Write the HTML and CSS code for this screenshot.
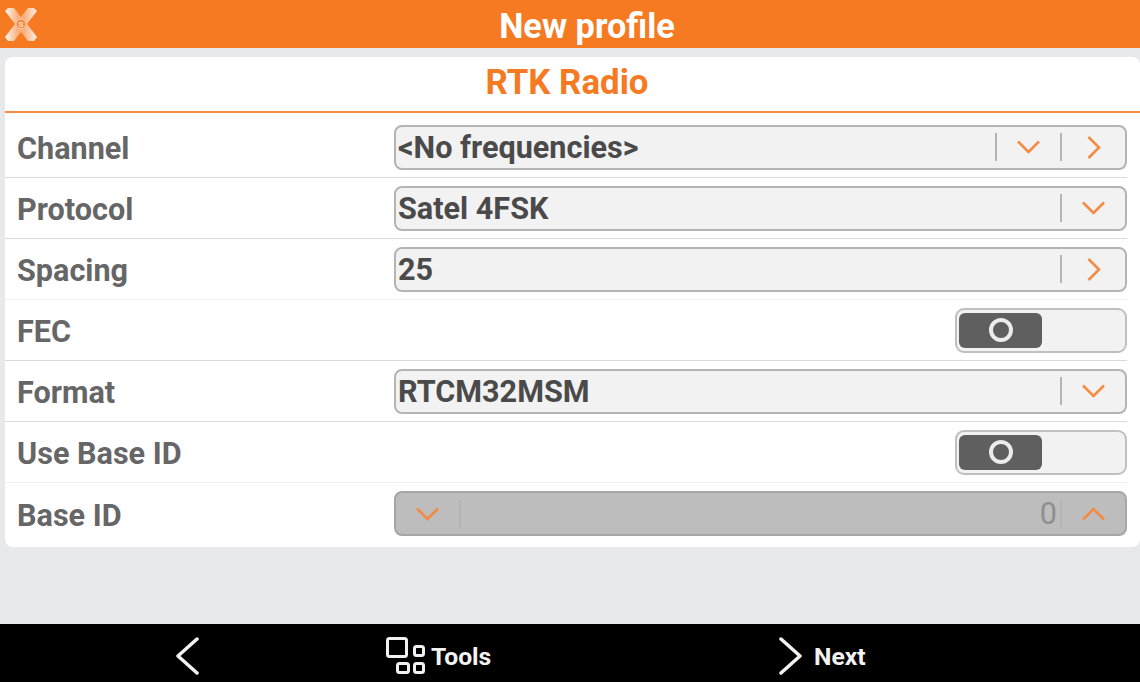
FILE: index.html
```html
<!DOCTYPE html>
<html lang="en">
<head>
<meta charset="utf-8">
<title>New profile</title>
<link rel="stylesheet" href="styles.css">
</head>
<body>
<div class="screen">
  <header class="topbar">
    <svg class="logo" viewBox="0 0 34 35" width="34" height="35">
      <defs>
        <linearGradient id="bandA" x1="0" y1="0" x2="1" y2="0">
          <stop offset="0" stop-color="#fff" stop-opacity=".95"/>
          <stop offset=".4" stop-color="#fff" stop-opacity=".4"/>
          <stop offset=".6" stop-color="#fff" stop-opacity=".4"/>
          <stop offset="1" stop-color="#fff" stop-opacity=".9"/>
        </linearGradient>
      </defs>
      <path d="M1 4 4 1h6l7 9 7-9h6l3 3-10 13 10 13-3 4h-6l-7-9-7 9H4l-3-4 10-13z" fill="url(#bandA)"/>
      <circle cx="17" cy="17" r="5" class="logo-dot"/>
      <text x="17" y="20" class="logo-s" text-anchor="middle">S</text>
    </svg>
    <h1 class="page-title">New profile</h1>
  </header>

  <main class="content">
    <section class="card">
      <h2 class="card-title">RTK Radio</h2>
      <div class="rows">
        <div class="row">
          <span class="label">Channel</span>
          <div class="field">
            <span class="value">&lt;No frequencies&gt;</span>
            <span class="sep"></span>
            <span class="btn"><svg class="chev" viewBox="0 0 24 14"><path d="M1.500 1.500 12 12 22.500 1.500"/></svg></span>
            <span class="sep"></span>
            <span class="btn"><svg class="chev-r" viewBox="0 0 14 24"><path d="M1.500 1.500 12 12 1.500 22.500"/></svg></span>
          </div>
        </div>
        <div class="row">
          <span class="label">Protocol</span>
          <div class="field">
            <span class="value">Satel 4FSK</span>
            <span class="sep"></span>
            <span class="btn"><svg class="chev" viewBox="0 0 24 14"><path d="M1.500 1.500 12 12 22.500 1.500"/></svg></span>
          </div>
        </div>
        <div class="row">
          <span class="label">Spacing</span>
          <div class="field">
            <span class="value">25</span>
            <span class="sep"></span>
            <span class="btn"><svg class="chev-r" viewBox="0 0 14 24"><path d="M1.500 1.500 12 12 1.500 22.500"/></svg></span>
          </div>
        </div>
        <div class="row">
          <span class="label">FEC</span>
          <div class="toggle"><span class="knob"><span class="ring"></span></span></div>
        </div>
        <div class="row">
          <span class="label">Format</span>
          <div class="field">
            <span class="value">RTCM32MSM</span>
            <span class="sep"></span>
            <span class="btn"><svg class="chev" viewBox="0 0 24 14"><path d="M1.500 1.500 12 12 22.500 1.500"/></svg></span>
          </div>
        </div>
        <div class="row">
          <span class="label">Use Base ID</span>
          <div class="toggle"><span class="knob"><span class="ring"></span></span></div>
        </div>
        <div class="row">
          <span class="label">Base ID</span>
          <div class="field disabled">
            <span class="btn"><svg class="chev" viewBox="0 0 24 14"><path d="M1.500 1.500 12 12 22.500 1.500"/></svg></span>
            <span class="sep"></span>
            <span class="number">0</span>
            <span class="sep"></span>
            <span class="btn"><svg class="chev" viewBox="0 0 24 14"><path d="M1.500 12.500 12 2 22.500 12.500"/></svg></span>
          </div>
        </div>
      </div>
    </section>
  </main>

  <footer class="bottombar">
    <div class="nav nav-back">
      <svg class="nav-chev" viewBox="0 0 24 38"><path d="M22 2 3 19l19 17"/></svg>
    </div>
    <div class="nav nav-tools">
      <svg class="tools-icon" viewBox="0 0 39 38">
        <rect x="1.500" y="1.500" width="19" height="18" rx="2"/>
        <rect x="28.500" y="9.500" width="9" height="9" rx="2"/>
        <rect x="11.500" y="26.500" width="11" height="9" rx="2"/>
        <rect x="28.500" y="26.500" width="9" height="9" rx="2"/>
      </svg>
      <span class="nav-text">Tools</span>
    </div>
    <div class="nav nav-next">
      <svg class="nav-chev" viewBox="0 0 24 38"><path d="M2 2l19 17L2 36"/></svg>
      <span class="nav-text">Next</span>
    </div>
  </footer>
</div>
</body>
</html>
```

FILE: styles.css
```css
* { box-sizing: border-box; }
html, body { margin: 0; padding: 0; }
body { font-family: Roboto, "Liberation Sans", sans-serif; background: #e8e9ec; }

.screen { width: 1140px; height: 682px; display: flex; flex-direction: column; overflow: hidden; }

.topbar {
  height: 48px;
  flex: none;
  background: #f67a22;
  display: flex;
  align-items: center;
  justify-content: center;
  position: relative;
}
.logo { position: absolute; left: 4px; top: 7px; }
.logo-dot { fill: #f58a42; stroke: #fbd3b4; stroke-width: 1; }
.logo-s { font: 700 8px Roboto, sans-serif; fill: #fde3cf; }
.page-title { margin: 0; color: #fff; font-size: 34.300px; font-weight: 700; line-height: 48px; padding: 3px 0 0 34px; }

.content { flex: 1; padding: 9px 0 0 5px; }
.card { width: 1135px; height: 490px; background: #fff; border-radius: 8px; }
.card-title {
  margin: 0;
  height: 56px;
  border-bottom: 2px solid #f98c3f;
  color: #f67a22;
  font-size: 34.800px;
  font-weight: 700;
  line-height: 51px;
  text-align: center;
  padding-right: 11px;
}
.rows { padding: 0 13px 0 0; }
.row {
  height: 61px;
  display: flex;
  align-items: center;
  justify-content: space-between;
  border-bottom: 1px solid #d9d9d9;
  padding: 0 0 0 12px;
}
.row:first-child { height: 65px; padding-top: 4px; }
.row:nth-child(3) { border-bottom-color: #efefef; }
.row:nth-child(6) { border-bottom-color: #efefef; }
.row:last-child { border-bottom: 0; height: 63px; padding-bottom: 2px; }

.label { color: #666; font-size: 30.600px; font-weight: 700; padding-top: 3px; }

.field {
  width: 733px;
  height: 45px;
  background: #f2f2f2;
  border: 2px solid #b4b4b4;
  border-radius: 8px;
  display: flex;
  align-items: center;
  padding: 0 0 0 2px;
}
.value { flex: 1; color: #4a4a4a; font-size: 30.600px; font-weight: 700; line-height: 41px; }
.sep { width: 2px; height: 28px; background: #b4b4b4; flex: none; }
.btn { width: 63px; flex: none; display: flex; align-items: center; justify-content: center; }
.chev { width: 25px; height: 14px; fill: none; stroke: #f58a42; stroke-width: 2.500; }
.chev-r { width: 14px; height: 25px; fill: none; stroke: #f58a42; stroke-width: 2.500; }

.disabled { background: #bdbdbd; border-color: #a6a6a6; padding: 0; }
.number { flex: 1; text-align: right; color: #8f8f8f; font-size: 30.600px; line-height: 41px; padding-right: 3px; }

.toggle {
  width: 172px;
  height: 45px;
  background: #f2f2f2;
  border: 2px solid #c0c0c0;
  border-radius: 9px;
  padding: 3px 0 0 2px;
}
.knob {
  width: 83px;
  height: 35px;
  background: #5f5f5f;
  border-radius: 6px;
  display: flex;
  align-items: center;
  justify-content: center;
}
.ring { width: 24px; height: 24px; border: 4px solid #ececec; border-radius: 50%; }

.bottombar {
  height: 58px;
  flex: none;
  background: #000;
  display: flex;
  align-items: center;
  padding: 5px 0 0 175px;
}
.nav { display: flex; align-items: center; color: #f2f2f2; }
.nav-back { width: 211px; }
.nav-tools { gap: 6px; width: 393px; }
.nav-next { gap: 11px; }
.nav-text { font-size: 24.700px; font-weight: 700; padding-top: 1px; }
.nav-chev { width: 24px; height: 38px; fill: none; stroke: #f2f2f2; stroke-width: 3.500; stroke-linecap: round; stroke-linejoin: round; }
.tools-icon { width: 39px; height: 38px; fill: none; stroke: #f2f2f2; stroke-width: 3; }
```
